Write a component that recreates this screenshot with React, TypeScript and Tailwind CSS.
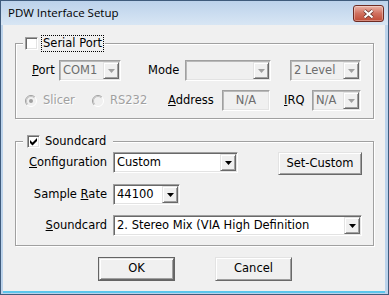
import React from "react";

const ui = "font-['DejaVu_Sans',sans-serif] text-[11.5px] leading-none";
const sunken = "border border-t-[#a0a0a0] border-l-[#a0a0a0] border-b-white border-r-white";
const raised =
  "border border-t-[#e3e3e3] border-l-[#e3e3e3] border-b-[#696969] border-r-[#696969] bg-[#f0f0f0] shadow-[inset_1px_1px_0_#fff,inset_-1px_-1px_0_#a0a0a0]";
const grayText = "text-[#a0a0a0] [text-shadow:1px_1px_0_#fff]";

function Caret({ disabled = false }: { disabled?: boolean }) {
  return (
    <svg width="7" height="4" viewBox="0 0 7 4" className="block">
      <path d="M0 0h7L3.5 4z" fill={disabled ? "#a0a0a0" : "#000"} />
    </svg>
  );
}

function Combo({ value = "", className = "", disabled = false }: { value?: string; className?: string; disabled?: boolean }) {
  return (
    <div
      className={`flex h-[21px] p-px ${sunken} ${
        disabled
          ? "bg-[#f0f0f0] text-[#6d6d6d] shadow-[inset_1px_1px_0_#b9b9b9,inset_-1px_-1px_0_#e3e3e3]"
          : "bg-white text-black shadow-[inset_1px_1px_0_#696969,inset_-1px_-1px_0_#e3e3e3]"
      } ${className}`}
    >
      <span className="flex flex-1 items-center overflow-hidden whitespace-nowrap pl-[2px]">{value}</span>
      <span className={`flex w-[16px] items-center justify-center ${raised}`}>
        <Caret disabled={disabled} />
      </span>
    </div>
  );
}

function Check({ checked = false }: { checked?: boolean }) {
  return (
    <span className={`flex h-[13px] w-[13px] shrink-0 bg-white ${sunken} shadow-[inset_1px_1px_0_#696969,inset_-1px_-1px_0_#e3e3e3]`}>
      {checked && (
        <svg width="11" height="11" viewBox="0 0 11 11" className="block">
          <polygon points="2,4 4.5,6.5 9,2 9,5 4.5,9.5 2,7" fill="#000" />
        </svg>
      )}
    </span>
  );
}

function Radio({ on = false }: { on?: boolean }) {
  return (
    <svg width="12" height="12" viewBox="0 0 12 12" className="block shrink-0">
      <circle cx="6" cy="6" r="5.5" fill="#f0f0f0" />
      <path d="M2.1 9.9A5.5 5.5 0 0 1 9.9 2.1" fill="none" stroke="#a0a0a0" />
      <path d="M9.9 2.1A5.5 5.5 0 0 1 2.1 9.9" fill="none" stroke="#fff" />
      <path d="M2.8 9.2A4.5 4.5 0 0 1 9.2 2.8" fill="none" stroke="#c4c4c4" />
      {on && <circle cx="6" cy="6" r="2" fill="#a0a0a0" />}
    </svg>
  );
}

function Button({ children, className = "", isDefault = false }: { children: React.ReactNode; className?: string; isDefault?: boolean }) {
  return (
    <div className={`${isDefault ? "border border-[#646464]" : ""} ${className}`}>
      <div className={`flex h-full w-full items-center justify-center text-black ${raised}`}>{children}</div>
    </div>
  );
}

function CloseButton() {
  return (
    <div className="flex h-[17px] w-[31px] items-center justify-center rounded-[3px] border border-[#6e2b23] bg-linear-to-b from-[#eab3a8] via-[#d0705f] to-[#c04a35] shadow-[inset_0_0_0_1px_rgba(255,255,255,0.35)]">
      <svg width="13" height="10" viewBox="0 0 13 10" className="block">
        <path d="M2.5 1.5L10.5 8.5M10.5 1.5L2.5 8.5" stroke="#5b2b26" strokeWidth="3.6" />
        <path d="M2.5 1.5L10.5 8.5M10.5 1.5L2.5 8.5" stroke="#fff" strokeWidth="2.2" />
      </svg>
    </div>
  );
}

export default function App() {
  return (
    <div className={`flex h-[295px] w-[389px] flex-col border border-[#3f5b7c] bg-[#bcd3eb] pl-[2px] pr-[3px] pb-[3px] ${ui}`}>
      {/* title bar */}
      <div className="-mx-[2px] -mr-[3px] flex h-[24px] items-start bg-linear-to-b from-[#bcd2eb] to-[#d8e6f4] pl-[7px] pr-[4px]">
        <span className="mt-[6px] font-['Open_Sans',sans-serif] text-[11.5px] leading-none text-black">PDW Interface Setup</span>
        <div className="ml-auto mt-[4px]">
          <CloseButton />
        </div>
      </div>

      {/* client area */}
      <div className="flex h-[266px] flex-col bg-[#f0f0f0] pt-[10px] shadow-[0_2px_0_#5cc6ec]">
        <fieldset className="ml-[12px] w-[359px] border border-[#a0a0a0] pb-[7px] pl-[7px] shadow-[inset_1px_1px_0_#fff,1px_1px_0_#fff]">
          <legend className="flex h-[17px] items-center bg-[#f0f0f0] pl-[2px] pr-px">
            <Check />
            <span className="ml-[3px] flex h-[17px] items-center border border-dotted border-black px-px text-black">Serial Port</span>
          </legend>

          <div className="mt-[8px] flex h-[21px] items-center">
            <span className="ml-[9px] w-[27px] text-black">
              <u>P</u>ort
            </span>
            <Combo value="COM1" disabled className="w-[62px]" />
            <span className="ml-[27px] w-[37px] text-black">Mode</span>
            <Combo disabled className="w-[86px]" />
            <Combo value="2 Level" disabled className="ml-[19px] w-[71px]" />
          </div>

          <div className="mt-[9px] flex h-[21px] items-center">
            <div className="ml-[2px] flex w-[67px] items-center">
              <Radio on />
              <span className={`ml-[6px] ${grayText}`}>Slicer</span>
            </div>
            <div className="flex w-[76px] items-center">
              <Radio />
              <span className={`ml-[6px] ${grayText}`}>RS232</span>
            </div>
            <span className="w-[54px] text-black">
              <u>A</u>ddress
            </span>
            <div className={`flex h-[21px] w-[48px] items-center justify-center bg-[#f0f0f0] text-[#6d6d6d] ${sunken} shadow-[inset_1px_1px_0_#b9b9b9,inset_-1px_-1px_0_#e3e3e3]`}>
              N/A
            </div>
            <span className="ml-[14px] w-[28px] text-black">
              <u>I</u>RQ
            </span>
            <Combo value="N/A" disabled className="w-[49px]" />
          </div>
        </fieldset>

        <fieldset className="ml-[12px] mt-[14px] w-[359px] border border-[#a0a0a0] pb-[9px] pl-[7px] shadow-[inset_1px_1px_0_#fff,1px_1px_0_#fff]">
          <legend className="flex h-[17px] items-center bg-[#f0f0f0] pl-[4px] pr-[7px]">
            <Check checked />
            <span className="ml-[5px] text-black">Soundcard</span>
          </legend>

          <div className="mt-[2px] flex items-start">
            <span className="flex h-[21px] w-[84px] items-center justify-end text-black">
              <span>
                <u>C</u>onfiguration
              </span>
            </span>
            <Combo value="Custom" className="ml-[6px] w-[125px]" />
            <Button className="ml-[40px] h-[23px] w-[84px]">Set-Custom</Button>
          </div>

          <div className="mt-[9px] flex items-center">
            <span className="flex h-[21px] w-[84px] items-center justify-end text-black">
              <span>
                Sample <u>R</u>ate
              </span>
            </span>
            <Combo value="44100" className="ml-[6px] w-[67px]" />
          </div>

          <div className="mt-[10px] flex items-center">
            <span className="flex h-[21px] w-[84px] items-center justify-end text-black">
              <span>
                <u>S</u>oundcard
              </span>
            </span>
            <Combo value="2. Stereo Mix (VIA High Definition" className="ml-[6px] w-[249px]" />
          </div>
        </fieldset>

        <div className="mt-[11px] flex">
          <Button isDefault className="ml-[95px] h-[24px] w-[77px]">
            OK
          </Button>
          <Button className="ml-[40px] h-[24px] w-[77px]">Cancel</Button>
        </div>
      </div>
    </div>
  );
}
